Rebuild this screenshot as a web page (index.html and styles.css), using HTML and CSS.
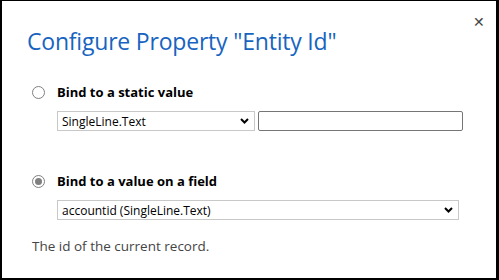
FILE: index.html
```html
<!DOCTYPE html>
<html lang="en">
<head>
  <meta charset="UTF-8">
  <meta name="viewport" content="width=device-width, initial-scale=1.0">
  <title>Configure Property</title>
  <link rel="stylesheet" href="styles.css">
</head>
<body>
  <div class="dialog">
    <button class="close" type="button">&#x2715;</button>
    <h1 class="title">Configure Property "Entity Id"</h1>

    <div class="option">
      <label class="choice">
        <input type="radio" name="bind" class="radio">
        <span>Bind to a static value</span>
      </label>
      <div class="fields">
        <div class="select short">
          <span>SingleLine.Text</span>
          <svg class="chev" width="9" height="6" viewBox="0 0 9 6"><path d="M1 1 L4.5 4.5 L8 1" fill="none" stroke="#000" stroke-width="2"/></svg>
        </div>
        <input type="text" class="text">
      </div>
    </div>

    <div class="option">
      <label class="choice">
        <input type="radio" name="bind" class="radio" checked>
        <span>Bind to a value on a field</span>
      </label>
      <div class="fields">
        <div class="select long">
          <span>accountid (SingleLine.Text)</span>
          <svg class="chev" width="9" height="6" viewBox="0 0 9 6"><path d="M1 1 L4.5 4.5 L8 1" fill="none" stroke="#000" stroke-width="2"/></svg>
        </div>
      </div>
    </div>

    <p class="desc">The id of the current record.</p>
  </div>
</body>
</html>
```

FILE: styles.css
```css
body {
  margin: 0;
  background: #000;
  height: 280px;
  overflow: hidden;
  font-family: "Open Sans", "Noto Sans", sans-serif;
}
.dialog {
  position: relative;
  margin: 1px 3px 0 2px;
  height: 277px;
  background: #fff;
  box-sizing: border-box;
  padding: 24px 0 0 25px;
}
.close {
  position: absolute;
  top: 13px;
  right: 11px;
  border: none;
  background: none;
  color: #444;
  font-size: 14px;
  padding: 0;
  cursor: pointer;
}
.title {
  margin: 0;
  font-weight: 400;
  font-size: 23px;
  color: #1764c0;
  line-height: 32px;
  letter-spacing: -0.2px;
}
.option {
  margin-top: 26px;
}
.option + .option {
  margin-top: 41px;
}
.choice {
  display: flex;
  align-items: center;
  gap: 12px;
  padding-left: 5px;
  font-size: 13px;
  font-weight: 700;
  color: #000;
}
.radio {
  appearance: none;
  margin: 0;
  width: 13px;
  height: 13px;
  border: 1px solid #808080;
  border-radius: 50%;
  background: #fff;
  box-sizing: border-box;
  display: grid;
  place-content: center;
}
.radio:checked::before {
  content: "";
  width: 7px;
  height: 7px;
  border-radius: 50%;
  background: #808080;
}
.fields {
  display: flex;
  gap: 3px;
  margin: 10px 0 0 30px;
}
.select {
  display: flex;
  align-items: center;
  justify-content: space-between;
  height: 20px;
  box-sizing: border-box;
  border: 1px solid #c8c8c8;
  padding: 0 5px 0 4px;
  font-size: 12px;
  color: #000;
}
.short { width: 198px; }
.long { width: 402px; }
.text {
  width: 205px;
  height: 20px;
  box-sizing: border-box;
  border: 1px solid #767676;
  border-radius: 2px;
  margin: 0;
}
.desc {
  margin: 17px 0 0 5px;
  font-size: 13.5px;
  color: #444;
}
```
